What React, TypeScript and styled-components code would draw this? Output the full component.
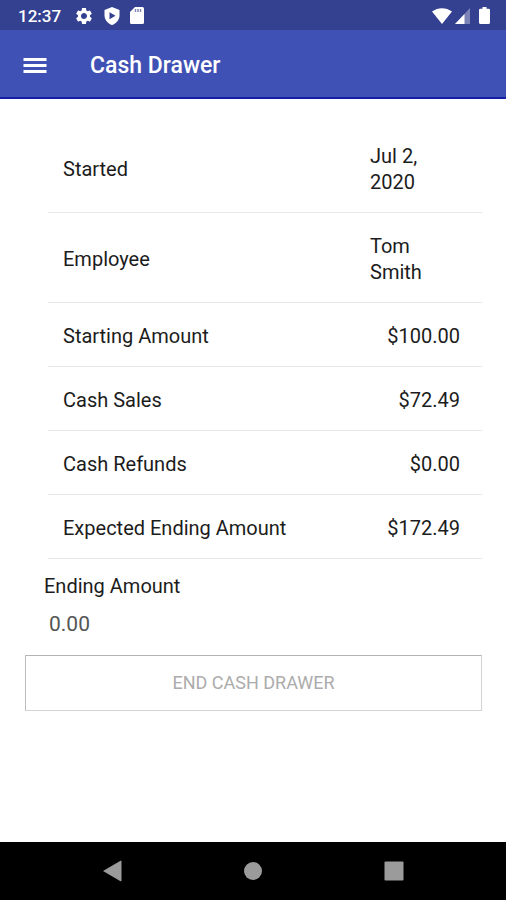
import React, { useState } from "react";
import styled, { createGlobalStyle } from "styled-components";

const GlobalStyle = createGlobalStyle`
  *, *::before, *::after { box-sizing: border-box; }
  body { margin: 0; background: #fff; }
  body, button, input { font-family: Roboto, "Liberation Sans", sans-serif; }
`;

const Screen = styled.div`
  min-height: 100vh;
  display: flex;
  flex-direction: column;
  color: #1c1c1c;
`;

const StatusBar = styled.div`
  height: 30px;
  padding: 1px 16px 0 18px;
  display: flex;
  align-items: center;
  justify-content: space-between;
  background: #344090;
  color: #fff;
`;

const StatusGroup = styled.div<{ $gap: number }>`
  display: flex;
  align-items: center;
  gap: ${({ $gap }) => $gap}px;
`;

const Clock = styled.time`
  font-size: 17px;
  line-height: 20px;
  font-weight: 500;
`;

const AppBar = styled.header`
  height: 69px;
  padding: 5px 24px 0 23px;
  display: flex;
  align-items: center;
  gap: 43px;
  background: #3f51b5;
  border-bottom: 2px solid #1420a4;
  color: #fff;
`;

const IconButton = styled.button`
  display: flex;
  padding: 0;
  border: 0;
  background: none;
  color: inherit;
  cursor: pointer;
`;

const Title = styled.h1`
  margin: 0;
  font-size: 23px;
  line-height: 32px;
  font-weight: 500;
`;

const Content = styled.main`
  flex: 1;
  padding: 24px 24px 24px 25px;
`;

const SummaryWrap = styled.div`
  padding-left: 23px;
`;

const Summary = styled.table`
  width: 100%;
  table-layout: fixed;
  border-collapse: separate;
  border-spacing: 0;
  font-size: 20px;
  line-height: 26px;
`;

const Label = styled.th`
  padding: 20px 0 17px 15px;
  border-bottom: 1px solid #e8e8e8;
  font-weight: 400;
  text-align: left;
`;

const Value = styled.td<{ $numeric: boolean }>`
  width: 112px;
  padding: 20px 22px 17px 0;
  border-bottom: 1px solid #e8e8e8;
  text-align: ${({ $numeric }) => ($numeric ? "right" : "left")};
`;

const Form = styled.form`
  display: flex;
  flex-direction: column;
`;

const FieldLabel = styled.label`
  padding: 14px 19px 0;
  font-size: 20px;
  line-height: 26px;
`;

const AmountInput = styled.input`
  width: 100%;
  height: 56px;
  padding: 0 24px 7px;
  border: 0;
  outline: 0;
  background: transparent;
  color: #555;
  font-size: 21px;
`;

const EndButton = styled.button`
  height: 56px;
  border: 1px solid #d4d4d4;
  border-top-color: #b4b4b4;
  border-left-color: #bcbcbc;
  background: #fff;
  color: #acacac;
  font-size: 18px;
  line-height: 24px;
  text-transform: uppercase;
`;

const NavBar = styled.nav`
  height: 58px;
  padding: 0 42px;
  display: grid;
  grid-template-columns: repeat(3, 1fr);
  place-items: center;
  background: #000;
  color: #9b9b9b;
`;

const rows = [
  { label: "Started", value: "Jul 2, 2020", numeric: false },
  { label: "Employee", value: "Tom Smith", numeric: false },
  { label: "Starting Amount", value: "$100.00", numeric: true },
  { label: "Cash Sales", value: "$72.49", numeric: true },
  { label: "Cash Refunds", value: "$0.00", numeric: true },
  { label: "Expected Ending Amount", value: "$172.49", numeric: true },
];

const GearIcon = () => (
  <svg width="20" height="20" viewBox="0 0 24 24" fill="currentColor" aria-hidden="true">
    <path d="M19.14 12.94c.04-.3.06-.61.06-.94 0-.32-.02-.64-.07-.94l2.03-1.58a.49.49 0 0 0 .12-.61l-1.92-3.32a.488.488 0 0 0-.59-.22l-2.39.96c-.5-.38-1.03-.7-1.62-.94l-.36-2.54a.484.484 0 0 0-.48-.41h-3.84c-.24 0-.43.17-.47.41l-.36 2.54c-.59.24-1.13.57-1.62.94l-2.39-.96c-.22-.08-.47 0-.59.22L2.74 8.87c-.12.21-.08.47.12.61l2.03 1.58c-.05.3-.09.63-.09.94s.02.64.07.94l-2.03 1.58a.49.49 0 0 0-.12.61l1.92 3.32c.12.22.37.29.59.22l2.39-.96c.5.38 1.03.7 1.62.94l.36 2.54c.05.24.24.41.48.41h3.84c.24 0 .44-.17.47-.41l.36-2.54c.59-.24 1.13-.56 1.62-.94l2.39.96c.22.08.47 0 .59-.22l1.92-3.32c.12-.22.07-.47-.12-.61l-2.01-1.58zM12 15.6A3.61 3.61 0 0 1 8.400 12c0-1.980 1.620-3.600 3.600-3.600s3.600 1.620 3.600 3.600-1.620 3.600-3.600 3.600z" />
  </svg>
);

const ShieldIcon = () => (
  <svg width="16" height="18" viewBox="0 0 16 18" aria-hidden="true">
    <path fill="currentColor" d="M8 0 15.500 3v5.500c0 4.300-3.200 8.200-7.500 9.500-4.300-1.300-7.500-5.200-7.500-9.500V3z" />
    <path fill="#344090" d="M5.500 5.200v7l6-3.500z" />
  </svg>
);

const CardIcon = () => (
  <svg width="14" height="17" viewBox="0 0 14 17" aria-hidden="true">
    <path fill="currentColor" d="M5 0h7.500Q14 0 14 1.500v14q0 1.500-1.500 1.500h-11Q0 17 0 15.500V5z" />
    <path stroke="#344090" strokeOpacity=".65" strokeWidth="1.400" d="M5.500 2v3M8 2v3M10.500 2v3" />
  </svg>
);

const WifiIcon = () => (
  <svg width="20" height="16" viewBox="0 0 20 16" aria-hidden="true">
    <path fill="currentColor" d="M0 3.500C6-1 14-1 20 3.500L10 16z" />
  </svg>
);

const SignalIcon = () => (
  <svg width="15" height="16" viewBox="0 0 15 16" aria-hidden="true">
    <path fill="currentColor" fillOpacity=".35" d="M15 0v16H0z" />
    <path fill="currentColor" d="M9.500 5.900V16H0z" />
  </svg>
);

const BatteryIcon = () => (
  <svg width="11" height="17" viewBox="0 0 11 17" aria-hidden="true">
    <path fill="currentColor" d="M3.500 0h4v1.700h2Q11 1.700 11 3v12.500Q11 17 9.500 17h-8Q0 17 0 15.500V3q0-1.300 1.500-1.300h2z" />
  </svg>
);

const MenuIcon = () => (
  <svg width="24" height="18" viewBox="0 0 24 18" aria-hidden="true">
    <path fill="currentColor" d="M.5 1h23v3H.5zM.5 7h23v3H.5zM.5 13h23v3H.5z" />
  </svg>
);

const BackIcon = () => (
  <svg width="20" height="22" viewBox="0 0 20 22" aria-hidden="true">
    <path fill="currentColor" d="M1 11 18.500.8q1-.5 1 .6v19.200q0 1.100-1 .6z" />
  </svg>
);

const HomeIcon = () => (
  <svg width="20" height="20" viewBox="0 0 20 20" aria-hidden="true">
    <circle cx="10" cy="10" r="9" fill="currentColor" />
  </svg>
);

const RecentIcon = () => (
  <svg width="20" height="20" viewBox="0 0 20 20" aria-hidden="true">
    <rect x=".5" y=".5" width="19" height="19" rx="1" fill="currentColor" />
  </svg>
);

export default function App() {
  const [amount, setAmount] = useState("0.00");

  return (
    <Screen>
      <GlobalStyle />
      <StatusBar>
        <StatusGroup $gap={13}>
          <Clock>12:37</Clock>
          <StatusGroup $gap={10}>
            <GearIcon />
            <ShieldIcon />
            <CardIcon />
          </StatusGroup>
        </StatusGroup>
        <StatusGroup $gap={3}>
          <WifiIcon />
          <StatusGroup $gap={9}>
            <SignalIcon />
            <BatteryIcon />
          </StatusGroup>
        </StatusGroup>
      </StatusBar>
      <AppBar>
        <IconButton type="button" aria-label="Open menu">
          <MenuIcon />
        </IconButton>
        <Title>Cash Drawer</Title>
      </AppBar>
      <Content>
        <SummaryWrap>
          <Summary>
            <colgroup>
              <col />
              <col width="112" />
            </colgroup>
            <tbody>
              {rows.map(({ label, value, numeric }) => (
                <tr key={label}>
                  <Label scope="row">{label}</Label>
                  <Value $numeric={numeric}>{value}</Value>
                </tr>
              ))}
            </tbody>
          </Summary>
        </SummaryWrap>
        <Form onSubmit={(event) => event.preventDefault()}>
          <FieldLabel htmlFor="ending-amount">Ending Amount</FieldLabel>
          <AmountInput
            id="ending-amount"
            inputMode="decimal"
            value={amount}
            onChange={(event) => setAmount(event.target.value)}
          />
          <EndButton type="submit" disabled>
            End Cash Drawer
          </EndButton>
        </Form>
      </Content>
      <NavBar aria-label="System navigation">
        <IconButton type="button" aria-label="Back">
          <BackIcon />
        </IconButton>
        <IconButton type="button" aria-label="Home">
          <HomeIcon />
        </IconButton>
        <IconButton type="button" aria-label="Recent apps">
          <RecentIcon />
        </IconButton>
      </NavBar>
    </Screen>
  );
}
